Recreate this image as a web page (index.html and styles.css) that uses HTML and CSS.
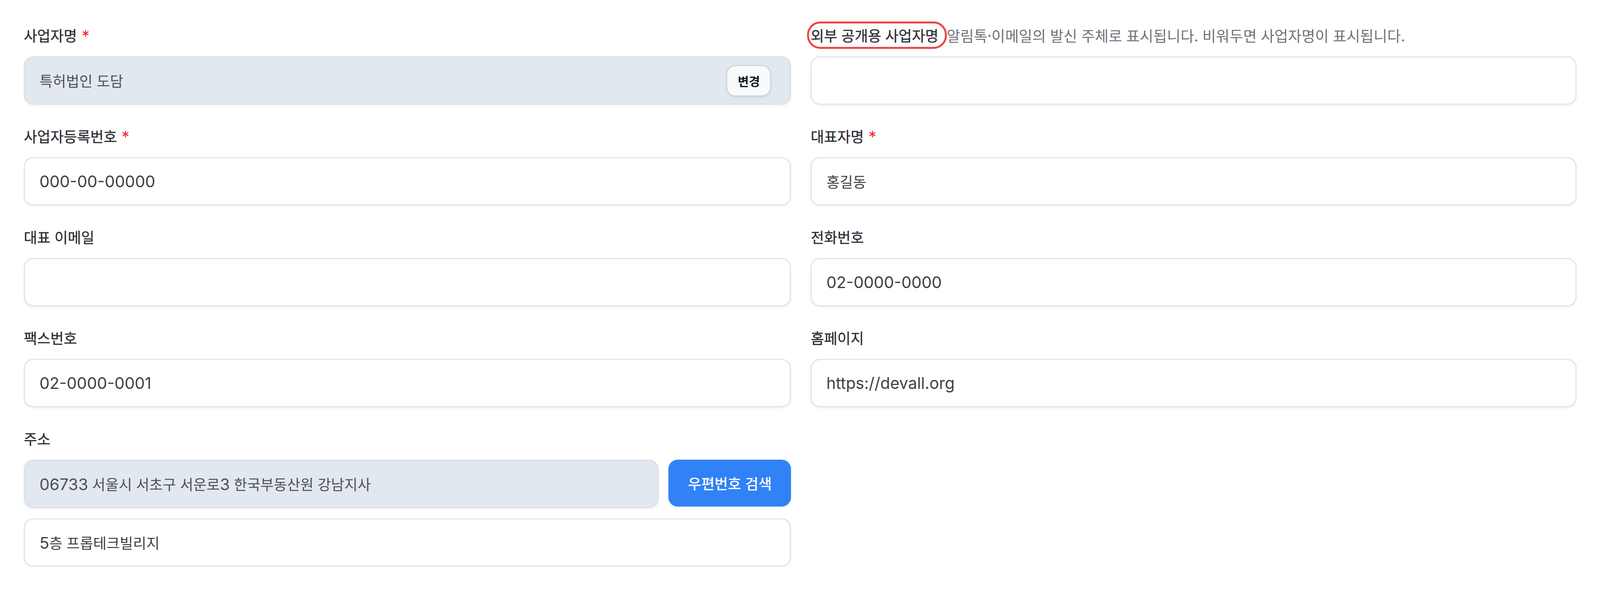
FILE: index.html
```html
<!DOCTYPE html>
<html lang="ko">
<head>
<meta charset="utf-8">
<title>사업자 정보</title>
<link rel="stylesheet" href="styles.css">
</head>
<body>
<main class="form">
  <div class="grid">
    <div class="field">
      <label class="label">사업자명<span class="req">*</span></label>
      <div class="inp readonly with-btn">
        <span class="val">특허법인 도담</span>
        <button class="btn-change" type="button">변경</button>
      </div>
    </div>
    <div class="field">
      <label class="label"><span class="mark">외부 공개용 사업자명</span><span class="hint">알림톡·이메일의 발신 주체로 표시됩니다. 비워두면 사업자명이 표시됩니다.</span></label>
      <input class="inp" type="text" value="">
    </div>

    <div class="field">
      <label class="label">사업자등록번호<span class="req">*</span></label>
      <input class="inp lat" type="text" value="000-00-00000">
    </div>
    <div class="field">
      <label class="label">대표자명<span class="req">*</span></label>
      <input class="inp" type="text" value="홍길동">
    </div>

    <div class="field">
      <label class="label">대표 이메일</label>
      <input class="inp" type="text" value="">
    </div>
    <div class="field">
      <label class="label">전화번호</label>
      <input class="inp lat" type="text" value="02-0000-0000">
    </div>

    <div class="field">
      <label class="label">팩스번호</label>
      <input class="inp lat" type="text" value="02-0000-0001">
    </div>
    <div class="field">
      <label class="label">홈페이지</label>
      <input class="inp lat" type="text" value="https://devall.org">
    </div>

    <div class="field">
      <label class="label">주소</label>
      <div class="addr-row">
        <div class="inp readonly addr-main"><span class="val"><span class="lat">06733</span> 서울시 서초구 서운로<span class="lat">3</span> 한국부동산원 강남지사</span></div>
        <button class="btn-primary" type="button">우편번호 검색</button>
      </div>
      <div class="inp"><span class="val"><span class="lat">5</span>층 프롭테크빌리지</span></div>
    </div>
  </div>
</main>
</body>
</html>
```
FILE: styles.css
```css
html, body {
  margin: 0;
  padding: 0;
  background: #ffffff;
}

body {
  font-family: "Noto Sans CJK KR", "Noto Sans", sans-serif;
  font-size: 37px;
  color: #3f3f46;
}

.form {
  padding: 64px 60px 0 61px;
}

.grid {
  display: grid;
  grid-template-columns: 2057fr 2053fr;
  column-gap: 50px;
  row-gap: 54px;
  align-items: start;
}

.field {
  display: flex;
  flex-direction: column;
  min-width: 0;
}

.label {
  display: block;
  height: 52px;
  line-height: 52px;
  margin-bottom: 28px;
  font-size: 37px;
  font-weight: 400;
  color: #2e2e34;
  -webkit-text-stroke: 0.5px #2e2e34;
  white-space: nowrap;
}

.req {
  font-family: Inter, sans-serif;
  font-size: 40px;
  color: #f5222d;
  -webkit-text-stroke: 0;
  margin-left: 12px;
}

.mark {
  position: relative;
  display: inline-block;
}

.mark::after {
  content: "";
  position: absolute;
  top: -9px;
  bottom: -9px;
  left: -9px;
  right: -21px;
  border: 5px solid #ef4444;
  border-radius: 34px;
  pointer-events: none;
}

.hint {
  margin-left: 21px;
  font-size: 37.8px;
  font-weight: 400;
  color: #71717a;
  -webkit-text-stroke: 0;
}

.inp {
  display: flex;
  align-items: center;
  box-sizing: border-box;
  width: 100%;
  height: 124px;
  padding: 0 37px;
  border: 3px solid #e4e4e7;
  border-radius: 24px;
  background: #ffffff;
  box-shadow: 0 3px 6px rgba(0, 0, 0, 0.05);
  font-family: "Noto Sans CJK KR", sans-serif;
  font-size: 37px;
  font-weight: 400;
  color: #3f3f46;
  white-space: nowrap;
  outline: none;
}

.val {
  white-space: pre;
}

.lat {
  font-family: Inter, "Noto Sans CJK KR", sans-serif;
  font-size: 41px;
}

.inp.readonly {
  background: #e2e8f0;
  border-color: #dde1e7;
  color: #4f4f58;
}

.with-btn {
  justify-content: space-between;
  padding-right: 48px;
}

.btn-change {
  box-sizing: border-box;
  width: 115px;
  height: 81px;
  border: 3px solid #d3d7de;
  border-radius: 24px;
  background: #f8fafc;
  box-shadow: 0 3px 5px rgba(0, 0, 0, 0.08);
  font-family: "Noto Sans CJK KR", sans-serif;
  font-size: 31px;
  font-weight: 700;
  color: #0f172a;
  padding: 0;
}

.addr-row {
  display: flex;
  align-items: flex-start;
  gap: 25px;
  margin-bottom: 26px;
}

.addr-main {
  flex: 1;
  min-width: 0;
}

.btn-primary {
  flex: 0 0 314px;
  height: 120px;
  border: none;
  border-radius: 24px;
  background: #3182f6;
  box-shadow: 0 3px 6px rgba(0, 0, 0, 0.06);
  font-family: "Noto Sans CJK KR", sans-serif;
  font-size: 37px;
  font-weight: 500;
  color: #ffffff;
  padding: 0;
}
```
